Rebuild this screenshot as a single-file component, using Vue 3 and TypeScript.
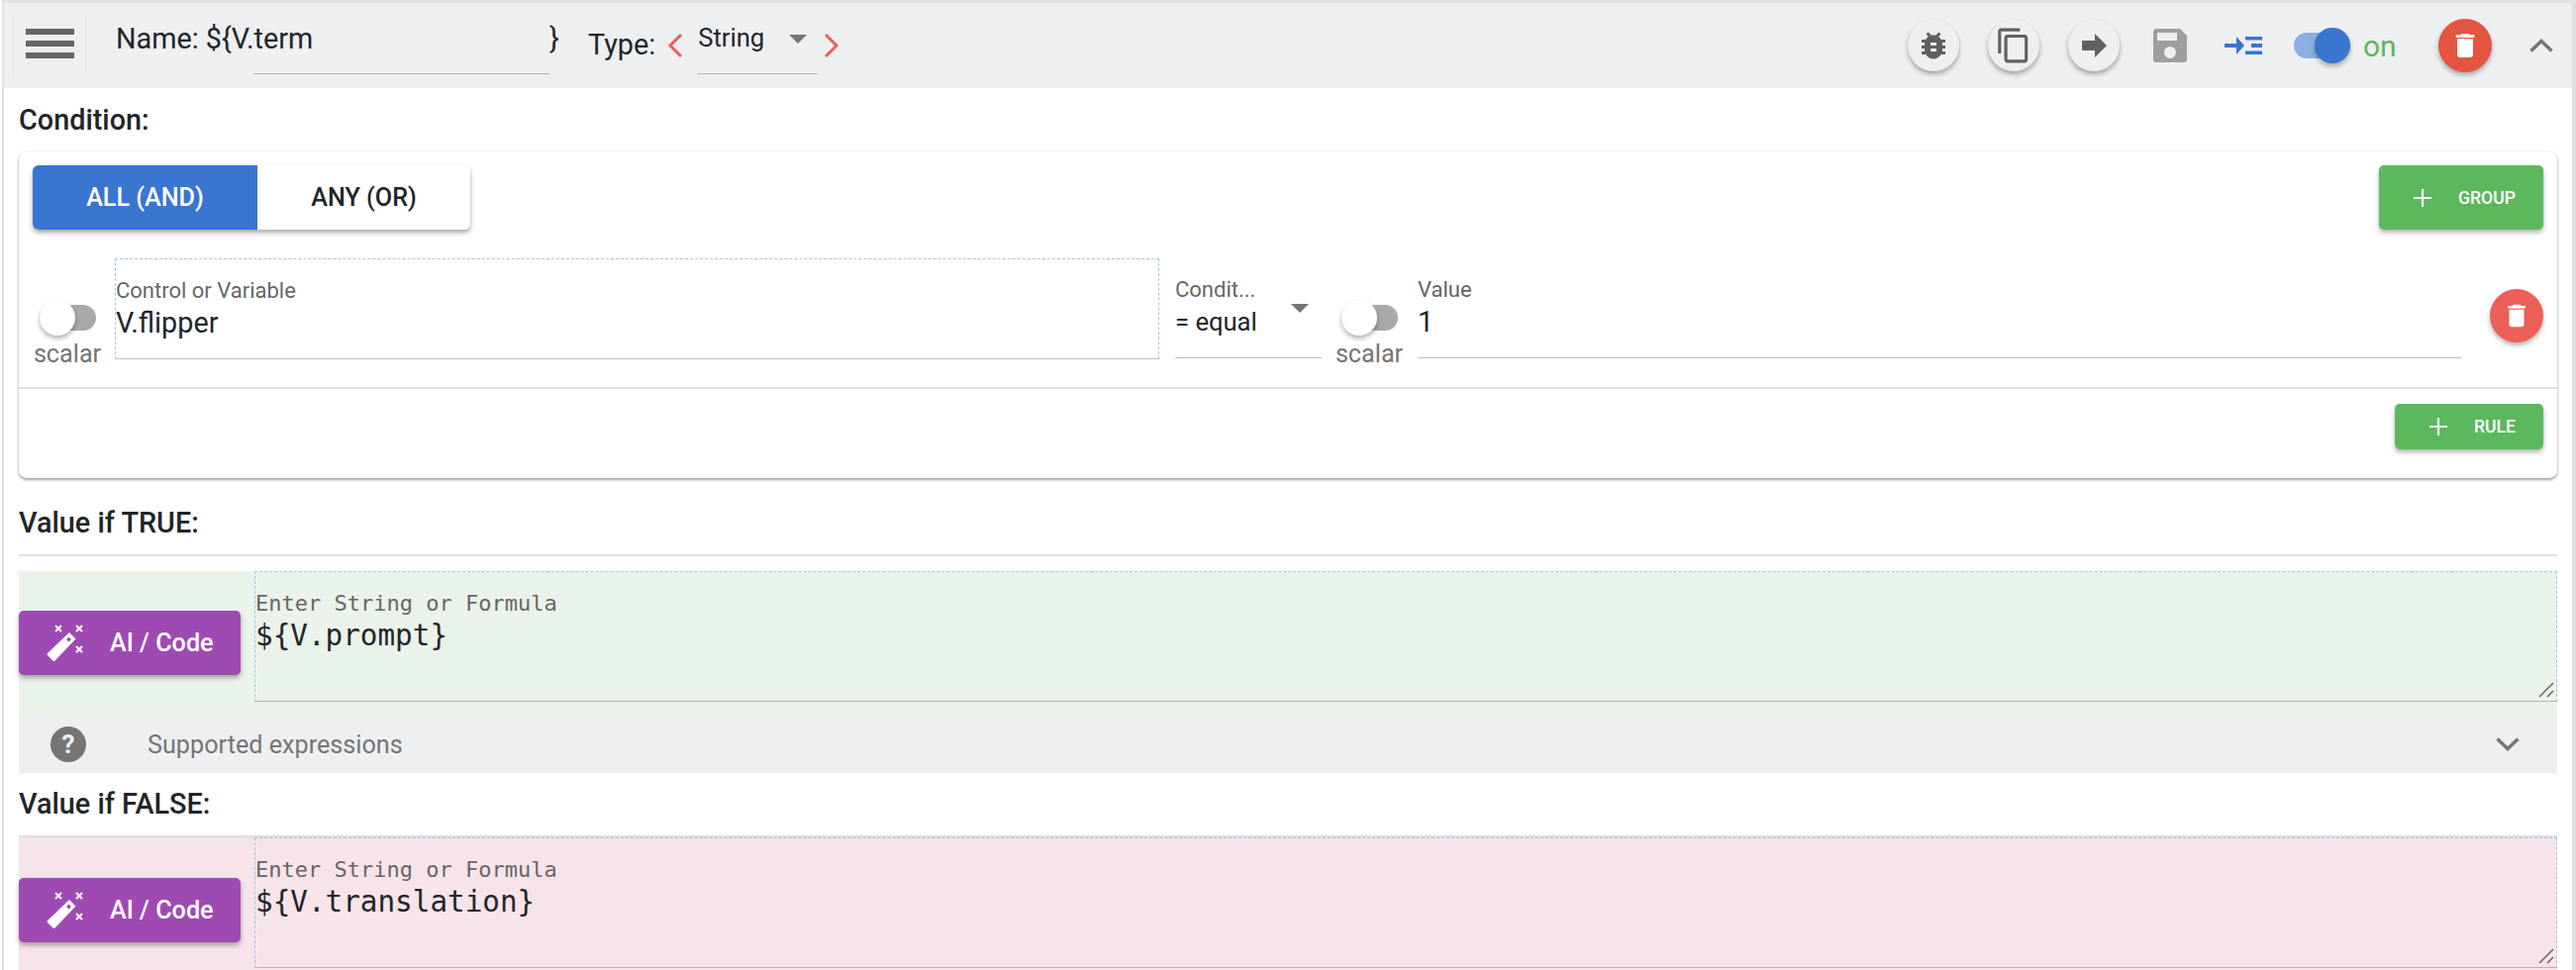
<script setup lang="ts">
const trash = 'M6 19c0 1.1.9 2 2 2h8c1.1 0 2-.9 2-2V7H6v12zM19 4h-3.5l-1-1h-5l-1 1H5v2h14V4z'
</script>

<template>
  <div class="page">
    <header class="head">
      <div class="menu">
        <svg width="49" height="30" viewBox="0 0 49 30"><path d="M0 0h49v6H0zM0 12h49v6H0zM0 24h49v6H0z" fill="#666" /></svg>
      </div>
      <div class="name">
        <span class="name-text">Name: ${V.term</span>
        <span class="brace">}</span>
      </div>
      <span class="type-label">Type:</span>
      <svg class="nav prev" width="16" height="24" viewBox="0 0 16 24"><path d="M14 1 3 12l11 11" fill="none" stroke="#ec5f59" stroke-width="3" /></svg>
      <div class="type-select">
        <span>String</span>
        <i class="caret"></i>
      </div>
      <svg class="nav next" width="16" height="24" viewBox="0 0 16 24"><path d="m3 1 11 11L3 23" fill="none" stroke="#ec5f59" stroke-width="3" /></svg>
      <div class="spacer"></div>
      <button class="round light">
        <svg width="36" height="36" viewBox="0 0 24 24"><path fill="#616161" d="M20 8h-2.810c-.45-.78-1.070-1.450-1.820-1.960L17 4.410 15.590 3l-2.170 2.170C12.960 5.060 12.490 5 12 5s-.96.060-1.410.17L8.410 3 7 4.410l1.620 1.630C7.880 6.550 7.260 7.220 6.810 8H4v2h2.090c-.05.330-.09.660-.09 1v1H4v2h2v1c0 .34.040.67.090 1H4v2h2.810c1.040 1.790 2.970 3 5.190 3s4.150-1.210 5.190-3H20v-2h-2.090c.05-.33.090-.66.090-1v-1h2v-2h-2v-1c0-.34-.04-.67-.09-1H20V8zm-6 8h-4v-2h4v2zm0-4h-4v-2h4v2z" /></svg>
      </button>
      <button class="round light">
        <svg width="38" height="38" viewBox="0 0 24 24"><path fill="#616161" d="M16 1H4c-1.100 0-2 .9-2 2v14h2V3h12V1zm3 4H8c-1.100 0-2 .9-2 2v14c0 1.100.9 2 2 2h11c1.100 0 2-.9 2-2V7c0-1.100-.9-2-2-2zm0 16H8V7h11v14z" /></svg>
      </button>
      <button class="round light">
        <svg width="25" height="24" viewBox="0 0 25 24"><path fill="#616161" d="M0 7h13V0l12 12-12 12v-7H0z" /></svg>
      </button>
      <svg class="save" width="34" height="34" viewBox="0 0 34 34"><path fill="#9e9e9e" d="M3 0h24l7 7v24a3 3 0 0 1-3 3H3a3 3 0 0 1-3-3V3a3 3 0 0 1 3-3zm1 4v8h20V4zm13 14a6 6 0 1 0 0 12 6 6 0 0 0 0-12z" /></svg>
      <svg class="indent" width="38" height="20" viewBox="0 0 38 20"><path fill="#3a75d0" d="M0 8h12V1l8 9-8 9v-7H0zM21 1h17v3.500H21zM27 8h11v4H27zM21 15.500h17V19H21z" /></svg>
      <div class="switch on"><span class="track"></span><span class="thumb"></span></div>
      <span class="on-text">on</span>
      <button class="round red-dark">
        <svg width="32" height="32" viewBox="0 0 24 24"><path fill="#fff" :d="trash" /></svg>
      </button>
      <svg class="chev" width="24" height="14" viewBox="0 0 24 14"><path d="M1.500 12.500 12 2.500l10.500 10" fill="none" stroke="#757575" stroke-width="3.500" /></svg>
    </header>

    <main class="body">
      <h3 class="title cond-title">Condition:</h3>
      <section class="card">
        <div class="card-top">
          <div class="toggle">
            <span class="tg active">ALL (AND)</span>
            <span class="tg">ANY (OR)</span>
          </div>
          <button class="green group">
            <svg width="20" height="20" viewBox="0 0 20 20"><path d="M10 1v18M1 10h18" stroke="#fff" stroke-width="2.200" /></svg>
            <span>GROUP</span>
          </button>
        </div>
        <div class="rule">
          <div class="scalar">
            <div class="switch"><span class="track"></span><span class="thumb"></span></div>
            <span class="scalar-text">scalar</span>
          </div>
          <div class="field control">
            <span class="label">Control or Variable</span>
            <span class="val">V.flipper</span>
          </div>
          <div class="field cond">
            <span class="label">Condit...</span>
            <span class="val small">= equal</span>
            <i class="caret"></i>
          </div>
          <div class="scalar second">
            <div class="switch"><span class="track"></span><span class="thumb"></span></div>
            <span class="scalar-text">scalar</span>
          </div>
          <div class="field value">
            <span class="label">Value</span>
            <span class="val">1</span>
          </div>
          <button class="round red-soft">
            <svg width="30" height="30" viewBox="0 0 24 24"><path fill="#fff" :d="trash" /></svg>
          </button>
        </div>
        <div class="card-bottom">
          <button class="green ruleb">
            <svg width="20" height="20" viewBox="0 0 20 20"><path d="M10 1v18M1 10h18" stroke="#fff" stroke-width="2.200" /></svg>
            <span>RULE</span>
          </button>
        </div>
      </section>

      <h3 class="title true-title">Value if TRUE:</h3>
      <section class="panel green-panel">
        <button class="ai">
          <svg width="38" height="38" viewBox="0 0 38 38"><path fill="#fff" d="M23 8l6.500 6.500L9 36a2 2 0 0 1-3 0l-4.500-4.500a2 2 0 0 1 0-3z" /><path fill="#9f4ab3" d="M22.500 12.500l2.500 2.500-2.500 2.500-2.500-2.500z" /><path d="M9 1l6 6M15 1l-6 6M30 1l6 6M36 1l-6 6M30 22l6 6M36 22l-6 6" stroke="#fff" stroke-width="2" /></svg>
          <span>AI / Code</span>
        </button>
        <div class="area">
          <span class="area-label">Enter String or Formula</span>
          <span class="area-val">${V.prompt}</span>
          <svg class="grip" width="16" height="16" viewBox="0 0 16 16"><path d="M1 15 15 1M9 15l6-6" stroke="#666" stroke-width="1.500" /></svg>
        </div>
      </section>
      <div class="expander">
        <svg width="36" height="36" viewBox="0 0 36 36"><circle cx="18" cy="18" r="18" fill="#757575" /><text x="18" y="27" text-anchor="middle" class="q">?</text></svg>
        <span class="exp-text">Supported expressions</span>
        <svg class="exp-chev" width="24" height="14" viewBox="0 0 24 14"><path d="M1.500 1.500 12 11.500l10.500-10" fill="none" stroke="#757575" stroke-width="3.500" /></svg>
      </div>
      <h3 class="title false-title">Value if FALSE:</h3>
      <section class="panel pink-panel">
        <button class="ai">
          <svg width="38" height="38" viewBox="0 0 38 38"><path fill="#fff" d="M23 8l6.500 6.500L9 36a2 2 0 0 1-3 0l-4.500-4.500a2 2 0 0 1 0-3z" /><path fill="#9f4ab3" d="M22.500 12.500l2.500 2.500-2.500 2.500-2.500-2.500z" /><path d="M9 1l6 6M15 1l-6 6M30 1l6 6M36 1l-6 6M30 22l6 6M36 22l-6 6" stroke="#fff" stroke-width="2" /></svg>
          <span>AI / Code</span>
        </button>
        <div class="area">
          <span class="area-label">Enter String or Formula</span>
          <span class="area-val">${V.translation}</span>
          <svg class="grip" width="16" height="16" viewBox="0 0 16 16"><path d="M1 15 15 1M9 15l6-6" stroke="#666" stroke-width="1.500" /></svg>
        </div>
      </section>
    </main>
  </div>
</template>

<style>
html, body { margin: 0; background: #fff; overflow: hidden; }
</style>

<style scoped>
.page {
  box-sizing: border-box;
  width: 2602px;
  height: 980px;
  overflow: hidden;
  padding: 0 0 0 2px;
  background: #fff;
  font-family: Roboto, sans-serif;
  color: #212529;
}
.page > * { border-left: 2px solid #e0e0e0; border-right: 4px solid #e0e0e0; }
button { border: 0; padding: 0; font-family: inherit; }
svg { display: block; flex: none; }

.head {
  box-sizing: border-box;
  height: 89px;
  display: flex;
  align-items: center;
  background: #eeeff1 padding-box;
  border-top: 3px solid #e0e2e5;
  padding: 0 19px 0 9px;
}
.menu {
  box-sizing: border-box;
  width: 74px;
  height: 58px;
  display: flex;
  align-items: center;
  justify-content: center;
  border-left: 1px solid #e2e3e5;
  border-right: 1px solid #e2e3e5;
}
.menu svg { margin-bottom: 4px; }
.name {
  position: relative;
  display: flex;
  width: 448px;
  height: 58px;
  margin-left: 30px;
  font-size: 28.800px;
}
.name-text { width: 438px; padding-top: 5px; }
.name::after {
  content: "";
  position: absolute;
  left: 139px;
  width: 299px;
  bottom: 0;
  height: 1px;
  background: #b5b5b5;
}
.brace { padding-top: 5px; }
.type-label { font-size: 28.800px; margin: -2px 0 0 29px; }
.nav.prev { margin-left: 12px; }
.type-select {
  position: relative;
  box-sizing: border-box;
  width: 121px;
  height: 58px;
  margin-left: 15px;
  padding-top: 6px;
  font-size: 25.600px;
  border-bottom: 1px solid #b5b5b5;
}
.type-select .caret { position: absolute; left: 92px; top: 18px; }
.nav.next { margin-left: 5px; }
.caret {
  display: block;
  width: 0;
  height: 0;
  border-left: 9px solid transparent;
  border-right: 9px solid transparent;
  border-top: 9px solid #757575;
}
.spacer { flex: 1; }
.round {
  flex: none;
  border-radius: 50%;
  display: flex;
  align-items: center;
  justify-content: center;
}
.light {
  width: 52px;
  height: 52px;
  margin-right: 29px;
  background: #eeeff1;
  box-shadow: 0 3px 5px rgba(0, 0, 0, .32);
}
.save { margin: 0 38px 0 5px; }
.indent { margin-right: 32px; }
.switch { position: relative; width: 57px; height: 36px; flex: none; }
.track {
  position: absolute;
  left: 0;
  top: 5px;
  right: 0;
  height: 26px;
  border-radius: 13px;
  background: #a9a9a9;
}
.thumb {
  position: absolute;
  left: 0;
  top: 0;
  width: 36px;
  height: 36px;
  border-radius: 50%;
  background: #fff;
  box-shadow: 0 3px 5px rgba(0, 0, 0, .3);
}
.switch.on .track { background: #8cafe2; }
.switch.on .thumb { left: auto; right: 0; background: #3a75d0; }
.on-text { color: #5cb85c; font-size: 30px; margin: 0 44px 0 13px; width: 32px; }
.red-dark {
  width: 54px;
  height: 54px;
  background: #e35441;
  box-shadow: 0 3px 5px rgba(0, 0, 0, .3);
}
.chev { margin-left: 38px; }

.body { padding: 0 15px; height: 891px; box-sizing: border-box; }
.title { margin: 0; font-size: 28.800px; font-weight: 500; line-height: 28px; box-sizing: border-box; }
.cond-title { padding-top: 18px; }
.card {
  margin-top: 18px;
  height: 330px;
  box-sizing: border-box;
  background: #fff;
  border-radius: 8px;
  box-shadow: 0 2px 3px rgba(0, 0, 0, .35), 0 0 3px rgba(0, 0, 0, .1);
  display: flex;
  flex-direction: column;
}
.card-top {
  display: flex;
  justify-content: space-between;
  padding: 14px 14px 0;
}
.toggle {
  display: flex;
  height: 65px;
  border-radius: 6px;
  overflow: hidden;
  box-shadow: 0 3px 5px rgba(0, 0, 0, .35);
}
.tg {
  width: 215px;
  display: flex;
  align-items: center;
  justify-content: center;
  font-size: 25.200px;
  font-weight: 500;
}
.tg.active { width: 227px; background: #3a75d0; color: #fff; }
.green {
  display: flex;
  align-items: center;
  background: #5cb85c;
  color: #fff;
  border-radius: 5px;
  font-weight: 500;
  box-shadow: 0 3px 5px rgba(0, 0, 0, .3);
}
.group { width: 166px; height: 65px; padding-left: 34px; gap: 26px; font-size: 17.600px; }
.ruleb { width: 150px; height: 46px; padding-left: 34px; gap: 26px; font-size: 17.600px; }

.rule {
  position: relative;
  display: flex;
  height: 132px;
  margin-top: 29px;
  padding-left: 15px;
  border-bottom: 2px solid #e0e0e0;
  box-sizing: border-box;
}
.scalar { width: 68px; flex: none; display: flex; flex-direction: column; align-items: center; padding-top: 42px; }
.scalar-text { color: #757575; font-size: 25.200px; line-height: 28px; margin-top: 5px; }
.field { position: relative; display: flex; flex-direction: column; box-sizing: border-box; }
.label { font-size: 22px; color: #666; line-height: 24px; }
.val { font-size: 28.800px; line-height: 36px; margin-top: 2px; }
.val.small { font-size: 25.600px; }
.control {
  width: 1055px;
  height: 102px;
  margin-left: 14px;
  padding-top: 20px;
  border: 1px dashed #9cc8ee;
  border-bottom: 1px solid #bdbdbd;
}
.cond {
  width: 148px;
  height: 101px;
  margin-left: 16px;
  padding-top: 20px;
  border-bottom: 1px solid #bdbdbd;
}
.cond .caret { position: absolute; left: 117px; top: 46px; }
.second { margin-left: 14px; }
.value {
  width: 1054px;
  height: 101px;
  margin-left: 15px;
  padding-top: 20px;
  border-bottom: 1px solid #bdbdbd;
}
.red-soft {
  position: absolute;
  right: 14px;
  top: 31px;
  width: 54px;
  height: 54px;
  background: #ec5f59;
  box-shadow: 0 3px 5px rgba(0, 0, 0, .3);
}
.card-bottom { display: flex; justify-content: flex-end; padding: 15px 14px 0; }

.true-title { height: 79px; padding-top: 31px; border-bottom: 2px solid #e0e0e0; }
.panel {
  position: relative;
  display: flex;
  align-items: flex-start;
}
.green-panel { background: #eaf3e9; height: 146px; margin-top: 15px; }
.pink-panel { background: #f6e4ea; height: 140px; border-top: 2px solid #e0e0e0; box-sizing: border-box; }
.ai {
  width: 224px;
  height: 65px;
  margin-top: 40px;
  flex: none;
  display: flex;
  align-items: center;
  padding-left: 28px;
  gap: 26px;
  background: #9f4ab3;
  color: #fff;
  border-radius: 5px;
  font-size: 25.200px;
  font-weight: 500;
  box-shadow: 0 3px 5px rgba(0, 0, 0, .32);
}
.pink-panel .ai { margin-top: 41px; }
.area {
  position: relative;
  flex: 1;
  height: 132px;
  margin-left: 14px;
  box-sizing: border-box;
  padding-top: 19px;
  display: flex;
  flex-direction: column;
  font-family: "DejaVu Sans Mono", monospace;
  border: 1px dashed #9cc8ee;
  border-bottom: 1px solid #b0b5ae;
}
.pink-panel .area { border-bottom-color: #c6aab2; }
.area-label { font-size: 22px; line-height: 26px; color: #666; }
.area-val { font-size: 29.300px; line-height: 38px; margin-top: 0; color: #212529; }
.grip { position: absolute; right: 2px; bottom: 3px; }
.expander {
  display: flex;
  align-items: center;
  height: 58px;
  background: #eeeff1;
  padding-left: 32px;
}
.q { font: 700 26px Roboto, sans-serif; fill: #eeeff1; }
.exp-text { font-size: 25.200px; color: #757575; margin-left: 62px; }
.exp-chev { margin-left: auto; margin-right: 38px; }
.false-title { height: 63px; padding-top: 17px; }
</style>
